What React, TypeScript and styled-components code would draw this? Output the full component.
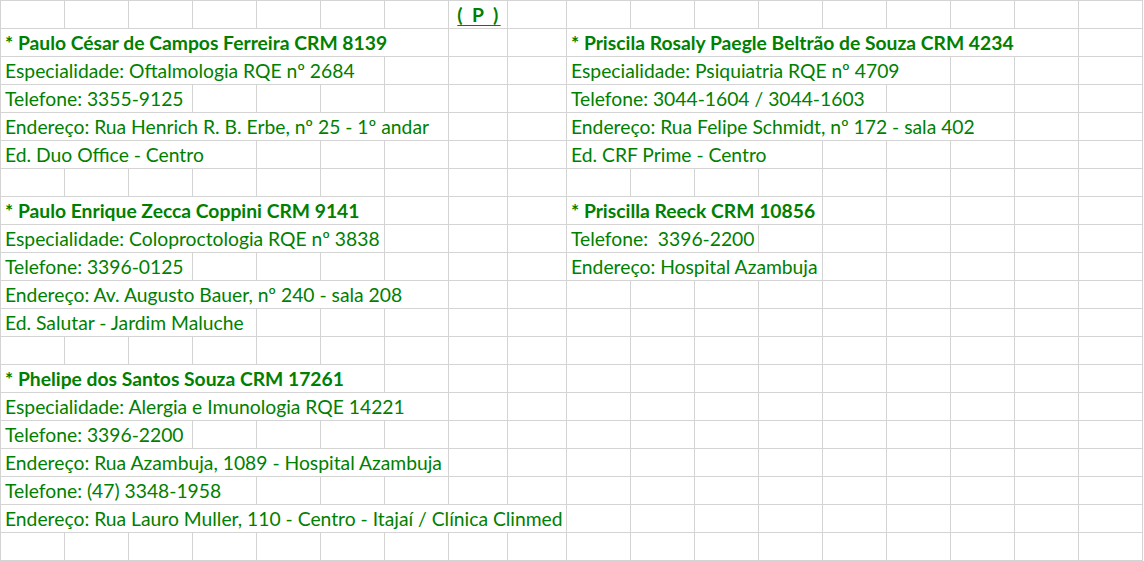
import type { ReactElement } from 'react';
import styled, { createGlobalStyle } from 'styled-components';

const GRID = '#d4d4d4';
const INK = '#008000';
const COLS = [64, 64, 64, 64, 64, 64, 64, 59, 59, 64, 64, 64, 64, 64, 64, 64, 64, 64];
const ROWS = 20;

type Entry = { col: number; span: number; text: string; bold?: boolean; title?: boolean };

// row index -> entries written in that row (span = cells the text runs over)
const DATA: Record<number, Entry[]> = {
  0: [{ col: 7, span: 1, text: '( P )', title: true }],
  1: [
    { col: 0, span: 7, text: '* Paulo César de Campos Ferreira CRM 8139', bold: true },
    { col: 9, span: 8, text: '* Priscila Rosaly Paegle Beltrão de Souza CRM 4234', bold: true },
  ],
  2: [
    { col: 0, span: 6, text: 'Especialidade: Oftalmologia RQE nº 2684' },
    { col: 9, span: 6, text: 'Especialidade: Psiquiatria RQE nº 4709' },
  ],
  3: [
    { col: 0, span: 3, text: 'Telefone: 3355-9125' },
    { col: 9, span: 5, text: 'Telefone: 3044-1604 / 3044-1603' },
  ],
  4: [
    { col: 0, span: 7, text: 'Endereço: Rua Henrich R. B. Erbe, nº 25 - 1º andar' },
    { col: 9, span: 7, text: 'Endereço: Rua Felipe Schmidt, nº 172 - sala 402' },
  ],
  5: [
    { col: 0, span: 4, text: 'Ed. Duo Office - Centro' },
    { col: 9, span: 4, text: 'Ed. CRF Prime - Centro' },
  ],
  7: [
    { col: 0, span: 6, text: '* Paulo Enrique Zecca Coppini CRM 9141', bold: true },
    { col: 9, span: 4, text: '* Priscilla Reeck CRM 10856', bold: true },
  ],
  8: [
    { col: 0, span: 6, text: 'Especialidade: Coloproctologia RQE nº 3838' },
    { col: 9, span: 3, text: 'Telefone:  3396-2200' },
  ],
  9: [
    { col: 0, span: 3, text: 'Telefone: 3396-0125' },
    { col: 9, span: 4, text: 'Endereço: Hospital Azambuja' },
  ],
  10: [{ col: 0, span: 7, text: 'Endereço: Av. Augusto Bauer, nº 240 - sala 208' }],
  11: [{ col: 0, span: 4, text: 'Ed. Salutar - Jardim Maluche' }],
  13: [{ col: 0, span: 6, text: '* Phelipe dos Santos Souza CRM 17261', bold: true }],
  14: [{ col: 0, span: 7, text: 'Especialidade: Alergia e Imunologia RQE 14221' }],
  15: [{ col: 0, span: 3, text: 'Telefone: 3396-2200' }],
  16: [{ col: 0, span: 7, text: 'Endereço: Rua Azambuja, 1089 - Hospital Azambuja' }],
  17: [{ col: 0, span: 4, text: 'Telefone: (47) 3348-1958' }],
  18: [{ col: 0, span: 9, text: 'Endereço: Rua Lauro Muller, 110 - Centro - Itajaí / Clínica Clinmed' }],
};

const GlobalStyle = createGlobalStyle`
  html, body {
    margin: 0;
    padding: 0;
    background: #ffffff;
  }
  body {
    font-family: Lato, "Liberation Sans", sans-serif;
  }
`;

const Sheet = styled.div`
  display: grid;
  grid-template-columns: ${COLS.map((w) => `${w}px`).join(' ')};
  grid-auto-rows: 28px;
  border-left: 1px solid ${GRID};
  border-top: 1px solid ${GRID};
  width: max-content;
`;

const Cell = styled.div<{ $span: number; $title?: boolean }>`
  grid-column: span ${(p) => p.$span};
  box-sizing: border-box;
  border-right: 1px solid ${GRID};
  border-bottom: 1px solid ${GRID};
  display: flex;
  align-items: flex-end;
  justify-content: ${(p) => (p.$title ? 'center' : 'flex-start')};
  padding: ${(p) => (p.$title ? '0 0 3px 2px' : '0 0 3px 4px')};
  overflow: visible;
  white-space: nowrap;
  min-width: 0;
`;

const CellText = styled.span<{ $bold?: boolean; $title?: boolean }>`
  color: ${INK};
  font-size: 19.3px;
  line-height: 20px;
  font-weight: ${(p) => (p.$bold || p.$title ? 700 : 400)};
  letter-spacing: ${(p) => (p.$title ? '2.4px' : '0')};
  text-decoration: ${(p) => (p.$title ? 'underline' : 'none')};
  text-decoration-thickness: 1px;
  text-underline-offset: 3px;
  white-space: pre;
`;

const buildRow = (r: number) => {
  const entries = DATA[r] ?? [];
  const cells: ReactElement[] = [];
  let c = 0;
  while (c < COLS.length) {
    const e = entries.find((x) => x.col === c);
    if (e) {
      cells.push(
        <Cell key={`${r}-${c}`} $span={e.span} $title={e.title}>
          <CellText $bold={e.bold} $title={e.title}>
            {e.text}
          </CellText>
        </Cell>,
      );
      c += e.span;
    } else {
      cells.push(<Cell key={`${r}-${c}`} $span={1} />);
      c += 1;
    }
  }
  return cells;
};

export default function App() {
  return (
    <>
      <GlobalStyle />
      <Sheet>{Array.from({ length: ROWS }, (_, r) => buildRow(r))}</Sheet>
    </>
  );
}
